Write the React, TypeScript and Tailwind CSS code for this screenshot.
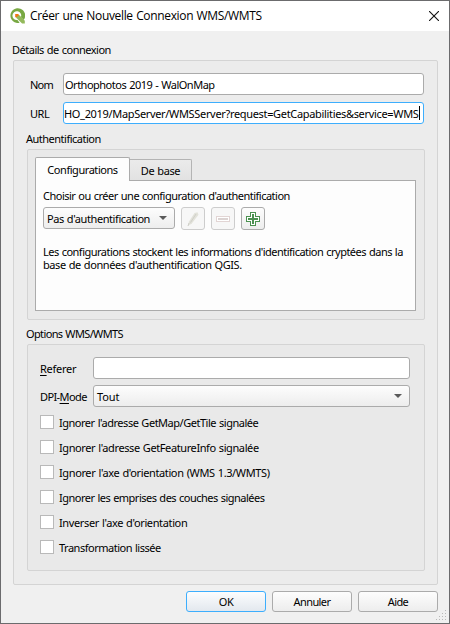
import React from "react";

const label = "whitespace-nowrap leading-[13px]";
const group = "rounded-[2px] border border-[#d4d4d4]";
const field = "h-[22px] rounded-[3px] border border-[#ababab] bg-white";
const gradient = "bg-linear-to-b from-[#fdfdfd] to-[#ededed]";

const options: { text: string; tracking: string }[] = [
  { text: "Ignorer l'adresse GetMap/GetTile signalée", tracking: "tracking-[-0.48px]" },
  { text: "Ignorer l'adresse GetFeatureInfo signalée", tracking: "tracking-[-0.4px]" },
  { text: "Ignorer l'axe d'orientation (WMS 1.3/WMTS)", tracking: "tracking-[-0.38px]" },
  { text: "Ignorer les emprises des couches signalées", tracking: "tracking-[-0.51px]" },
  { text: "Inverser l'axe d'orientation", tracking: "tracking-[-0.37px]" },
  { text: "Transformation lissée", tracking: "tracking-[-0.49px]" },
];

function Logo() {
  return (
    <svg className="h-4 w-4" viewBox="0 0 16 16">
      <path d="M14.7 12.1A7.4 7.4 0 1 0 10.6 14.8L8.5 12A4.4 4.4 0 1 1 11.9 9.3Z" fill="#78a843" />
      <path d="M7.2 7h3l5.6 5.8v2.8h-2.7L7.2 9.7Z" fill="#93b95b" />
      <path d="M6.2 6h3.4v1.2L7.6 9.2H6.2Z" fill="#ee7913" />
    </svg>
  );
}

function Arrow() {
  return (
    <svg className="h-1 w-2" viewBox="0 0 8 4">
      <path d="M0 0h8L4 4Z" fill="#5a5a5a" />
    </svg>
  );
}

function Grip() {
  const dots = [[9, 0], [6, 3], [9, 3], [3, 6], [6, 6], [9, 6], [0, 9], [3, 9], [6, 9], [9, 9]];
  return (
    <svg className="absolute right-[2px] bottom-[2px] h-[11px] w-[11px]" viewBox="0 0 11 11" shapeRendering="crispEdges">
      {dots.map(([x, y]) => (
        <rect key={`${x}-${y}`} x={x} y={y} width="1" height="1" fill="#b9b9b9" />
      ))}
    </svg>
  );
}

export default function App() {
  return (
    <div className="relative flex h-[624px] w-[450px] flex-col border border-[#6b6b6d] bg-[#f0f0f0] font-['Noto_Sans',sans-serif] text-[11px] tracking-[-0.5px] text-black [word-spacing:0.6px]">
      <header className="flex h-[30px] shrink-0 items-center bg-white pr-[10px] pl-[8px]">
        <Logo />
        <h1 className="ml-[5px] font-['Open_Sans',sans-serif] text-[12px] leading-4 tracking-[-0.34px] whitespace-nowrap">Créer une Nouvelle Connexion WMS/WMTS</h1>
        <svg className="ml-auto h-[10px] w-[10px]" viewBox="0 0 10 10">
          <path d="M0 0L10 10M10 0L0 10" stroke="#111" strokeWidth="1.1" />
        </svg>
      </header>

      <div className={`mt-[12px] ml-[11px] ${label}`}>Détails de connexion</div>

      <section className={`mt-[4px] ml-[12px] flex h-[525px] w-[425px] shrink-0 flex-col bg-[#ececec] pr-[12px] pl-[13px] ${group}`}>
        <div className="mt-[12px] flex items-center pl-[3px]">
          <span className={`w-[33px] tracking-[-0.8px] ${label}`}>Nom</span>
          <div className={`flex w-[361px] items-center px-[1px] ${field}`}>
            <span className={label}>Orthophotos 2019 - WalOnMap</span>
          </div>
        </div>
        <div className="mt-[7px] flex items-center pl-[3px]">
          <span className={`w-[33px] ${label}`}>URL</span>
          <div className="flex h-[22px] w-[361px] items-center rounded-[3px] border border-[#3daefd] bg-white">
            <span className={`tracking-[-0.33px] ${label}`}>HO_2019/MapServer/WMSServer?request=GetCapabilities&amp;service=WMS</span>
            <span className="h-[14px] w-px bg-black" />
          </div>
        </div>

        <div className={`mt-[8px] ml-[-1px] ${label}`}>Authentification</div>
        <div className={`mt-[4px] flex h-[171px] w-[398px] shrink-0 flex-col bg-[#e9e9e9] pl-[7px] ${group}`}>
          <div className="z-10 mt-[7px] flex h-[24px] items-end">
            <div className={`flex h-[24px] w-[95px] items-center justify-center rounded-t-[2px] border border-b-0 border-[#ababab] bg-[#fdfdfd] tracking-[-0.45px] ${label}`}>Configurations</div>
            <div className={`flex h-[22px] w-[62px] items-center justify-center rounded-tr-[2px] border border-l-0 border-[#b4b4b4] border-b-[#ababab] bg-linear-to-b from-[#ebebeb] to-[#e2e2e2] tracking-[-0.4px] ${label}`}>De base</div>
          </div>
          <div className="mt-[-1px] h-[131px] w-[381px] border border-[#ababab] bg-[#fdfdfd] pt-[8px] pl-[7px]">
            <div className={label}>Choisir ou créer une configuration d'authentification</div>
            <div className="mt-[5px] flex items-start">
              <div className={`flex h-[22px] w-[132px] items-center justify-between rounded-[3px] border border-[#ababab] pr-[7px] pl-[3px] ${gradient}`}>
                <span className={`tracking-[-0.42px] ${label}`}>Pas d'authentification</span>
                <Arrow />
              </div>
              <div className="ml-[6px] flex gap-[6px]">
                <div className="flex h-[23px] w-[24px] items-center justify-center rounded-[3px] border border-[#cdcdcd] bg-[#f7f7f7]">
                  <svg className="h-4 w-4" viewBox="0 0 16 16">
                    <path d="M3 15l1-4.5 5.5-8.5 3-.7 1 2.5-6.5 8.5Z" fill="#e2e2da" />
                    <path d="M5.5 11.5l5.5-8.5M3 15l1-3" stroke="#cfcfc9" />
                  </svg>
                </div>
                <div className="flex h-[23px] w-[24px] items-center justify-center rounded-[3px] border border-[#cdcdcd] bg-[#f7f7f7]">
                  <svg className="h-[6px] w-[14px]" viewBox="0 0 14 6" shapeRendering="crispEdges">
                    <path d="M.5.5h13v5H.5Z" fill="#fff" stroke="#e2d5d4" />
                    <path d="M2 2h10v2H2Z" fill="#dbd3d2" />
                  </svg>
                </div>
                <div className={`flex h-[23px] w-[24px] items-center justify-center rounded-[3px] border border-[#ababab] ${gradient}`}>
                  <svg className="h-[14px] w-[14px]" viewBox="0 0 14 14" shapeRendering="crispEdges">
                    <path d="M4.5.5h5v4h4v5h-4v4h-5v-4h-4v-5h4Z" fill="#fff" stroke="#4b9150" />
                    <path d="M6 2h2v4h4v2H8v4H6V8H2V6h4Z" fill="#4b9150" />
                  </svg>
                </div>
              </div>
            </div>
            <p className={`mt-[15px] tracking-[-0.43px] ${label}`}>
              <span className="block tracking-[-0.51px]">Les configurations stockent les informations d'identification cryptées dans la</span>
              <span className="block">base de données d'authentification QGIS.</span>
            </p>
          </div>
        </div>

        <div className={`mt-[7px] ml-[-1px] tracking-[-0.63px] ${label}`}>Options WMS/WMTS</div>
        <div className={`mt-[4px] flex h-[227px] w-[398px] shrink-0 flex-col bg-[#e9e9e9] pl-[12px] ${group}`}>
          <div className="mt-[12px] flex items-center">
            <span className={`w-[53px] tracking-[-0.25px] ${label}`}><u className="underline-offset-2">R</u>eferer</span>
            <div className={`w-[317px] ${field}`} />
          </div>
          <div className="mt-[6px] flex items-center">
            <span className={`w-[53px] tracking-[-0.6px] ${label}`}>DPI-<u className="underline-offset-2">M</u>ode</span>
            <div className={`flex h-[22px] w-[317px] items-center justify-between rounded-[3px] border border-[#ababab] pr-[7px] pl-[3px] ${gradient}`}>
              <span className={`tracking-[-0.1px] ${label}`}>Tout</span>
              <Arrow />
            </div>
          </div>
          <div className="mt-[8px] flex flex-col gap-[11px]">
            {options.map((o) => (
              <label key={o.text} className="flex h-[14px] items-center">
                <span className="h-[14px] w-[14px] border border-[#b9b9b9] bg-white" />
                <span className={`ml-[5px] ${label} ${o.tracking}`}>{o.text}</span>
              </label>
            ))}
          </div>
        </div>
      </section>

      <footer className="mt-[6px] flex justify-end gap-[6px] pr-[11px]">
        <button className={`h-[21px] w-[80px] rounded-[3px] border border-[#3daefd] bg-linear-to-b from-[#fcfdfe] to-[#e3e8ee] ${label}`}>OK</button>
        <button className={`h-[21px] w-[80px] rounded-[3px] border border-[#ababab] tracking-[-0.6px] ${gradient} ${label}`}>Annuler</button>
        <button className={`h-[21px] w-[80px] rounded-[3px] border border-[#ababab] tracking-[-0.6px] ${gradient} ${label}`}>Aide</button>
      </footer>
      <Grip />
    </div>
  );
}
